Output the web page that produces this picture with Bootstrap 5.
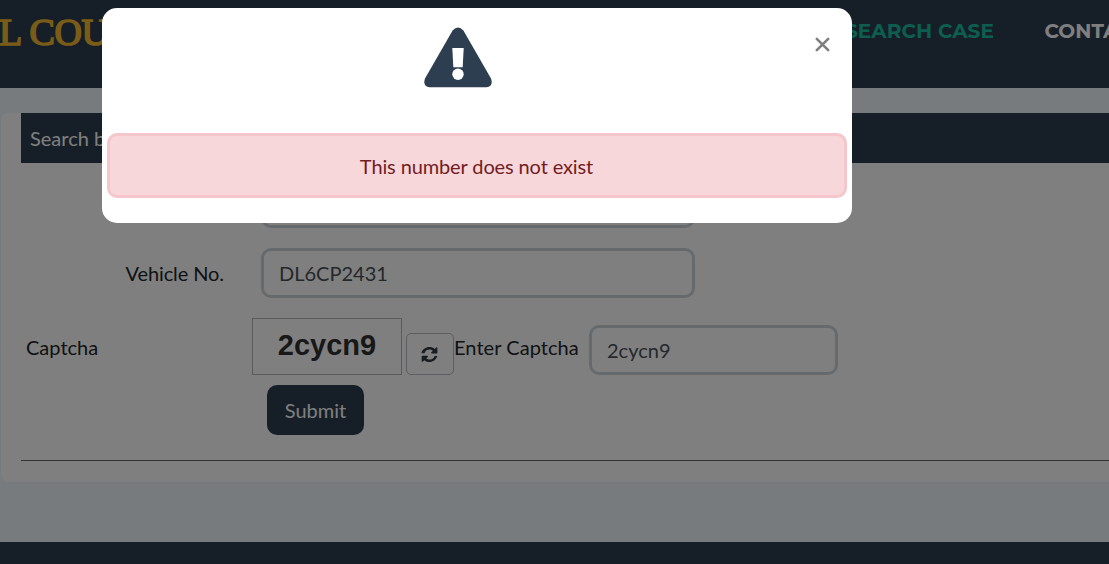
<!DOCTYPE html>
<html lang="en">
<head>
<meta charset="utf-8">
<meta name="viewport" content="width=device-width, initial-scale=1">
<title>Search Case</title>
<link href="https://cdn.jsdelivr.net/npm/bootstrap@5.3.0/dist/css/bootstrap.min.css" rel="stylesheet">
<style>
body{font-family:Lato,"Liberation Sans",sans-serif;font-size:20px;line-height:1.5;color:#212529;background:#eef7fd;overflow:hidden;height:564px}
.site-head{height:88px;background:#2c3e50;padding:0;overflow:hidden}
.site-title{font:400 38px/1 "Liberation Serif",serif;color:#f5b932;-webkit-text-stroke:1.6px #f5b932;width:846px;margin-top:13px;margin-left:-1px;white-space:nowrap;letter-spacing:-.4px}
.site-link{font:700 20px/24px Montserrat,Inter,sans-serif;color:#fff;white-space:nowrap;margin-top:19px;text-decoration:none}
.site-link.current{color:#1abc9c;width:199.5px;letter-spacing:.06px}
.panel{height:369px;margin:25px 0 0 1px;padding-left:20px;background:#fff;border-radius:8px 0 0 8px}
.panel-title{height:50px;background:#2c3e50;color:#fff;padding:10px 9px}
.fld{border:3px solid #ced4da;border-radius:10px;height:50px;padding:7px 15px;font-size:20px;color:#495057}
.fld-wide{width:434px}
.fld-code{width:249px;margin:7px 0 0 10px}
.row-first{height:50px;margin:15px 0 0 240px}
.row-vehicle{margin-top:20px;padding-left:104.5px;height:50px}
.vehicle-label{width:135.5px;letter-spacing:-.1px}
.row-captcha{height:57px;margin-top:20px;padding-left:5px}
.captcha-label{width:226px;padding-top:14px}
.enter-label{padding-top:14px;width:125px;letter-spacing:.05px;white-space:nowrap}
.captcha-img{width:150px;height:57px;border:1px solid #b4b7ba;font:700 29px/53px "Liberation Sans",sans-serif;color:#303030;text-align:center}
.refresh{width:48px;height:42px;margin:15px 0 0 4px;border:1px solid #b9bdc2;border-radius:5px;padding:0 2px 0 0;background:#fff}
.btn-go{margin:10px 0 0 246px;width:97px;height:50px;background:#2c3e50;color:#fff;border-radius:10px;font-size:20px;padding:0;border:0}
.panel hr{margin:25px 0 0;color:#212529;opacity:1;border-top:1px solid #666}
.site-foot{height:22px;margin-top:60px;background:#2c3e50}
.veil{background:rgba(0,0,0,.5);overflow:hidden}
.veil .modal-dialog{width:750px;max-width:none;margin:8px 0 0 102px}
.veil .modal-content{height:215px;border:0;border-radius:15px;position:relative}
.warn-icon{margin:19px 0 0 322px;display:block}
.x-btn{position:absolute;right:20px;top:27px;border:0;background:none;padding:0;line-height:0}
.note{margin:45px 5px 0;height:65px;border:3px solid #f5c6cb;border-radius:10px;background:#f8d7da;color:#721c24;padding:15px 1px 0 0;text-align:center;letter-spacing:-.12px}
</style>
</head>
<body>
<header class="site-head navbar d-flex flex-nowrap align-items-start justify-content-start">
  <div class="site-title flex-shrink-0">L COURTS</div>
  <a class="site-link current flex-shrink-0" href="#">SEARCH CASE</a>
  <a class="site-link flex-shrink-0" href="#">CONTACT</a>
</header>
<main class="panel">
  <div class="panel-title">Search by Vehicle</div>
  <div class="row-first"><input class="form-control fld fld-wide" aria-label="State"></div>
  <div class="row-vehicle d-flex align-items-center">
    <label class="vehicle-label" for="veh">Vehicle No.</label>
    <input id="veh" class="form-control fld fld-wide" value="DL6CP2431">
  </div>
  <div class="row-captcha d-flex align-items-start">
    <span class="captcha-label">Captcha</span>
    <div class="captcha-img">2cycn9</div>
    <button class="btn refresh d-flex align-items-center justify-content-center" aria-label="Refresh">
      <svg width="17" height="17" viewBox="0 0 512 512" fill="#343a40"><path d="M494 300c1 4-1 8-5 10C455 410 365 485 256 485c-58 0-116-20-158-57l-43 43c-12 12-35 5-35-14V316c0-11 9-20 20-20h149c19 0 26 23 14 35l-45 45c28 22 62 34 99 34 53 0 101-22 129-62 8-13 13-27 19-42 2-4 5-6 9-6h72c5 0 8 2 8 4zM494 54v149c0 11-9 20-20 20H325c-19 0-26-23-14-35l46-46c-28-22-63-34-101-34-53 0-101 22-129 62-8 13-13 27-19 42-2 4-5 6-9 6H23c-6 0-10-5-8-11C39 108 138 32 256 32c58 0 116 20 160 56l44-43c12-12 34-4 34 9z"/></svg>
    </button>
    <label class="enter-label" for="code">Enter Captcha</label>
    <input id="code" class="form-control fld fld-code" value="2cycn9">
  </div>
  <button class="btn btn-go d-block">Submit</button>
  <hr>
</main>
<footer class="site-foot"></footer>

<div class="modal veil show d-block" role="dialog">
  <div class="modal-dialog">
    <div class="modal-content">
      <svg class="warn-icon" width="68" height="61" viewBox="0 0 68 61"><path fill="#2c3e50" d="M28.6 3.6Q34-2.4 39.4 3.6L67 51.5Q69.5 59.6 62.5 60.3H5.5Q-1.5 59.6 1 51.5Z"/><path fill="#fff" d="M28.3 21H39.7L38.7 40.2H29.3Z"/><circle cx="34" cy="47.3" r="5.7" fill="#fff"/></svg>
      <button class="x-btn" aria-label="Close"><svg width="19" height="19" viewBox="0 0 19 19"><path d="M3.8 3.8L15.2 15.2M15.2 3.8L3.8 15.2" stroke="#7f7f7f" stroke-width="2.6" stroke-linecap="round"/></svg></button>
      <div class="note">This number does not exist</div>
    </div>
  </div>
</div>
<script src="https://cdn.jsdelivr.net/npm/bootstrap@5.3.0/dist/js/bootstrap.bundle.min.js"></script>
</body>
</html>
